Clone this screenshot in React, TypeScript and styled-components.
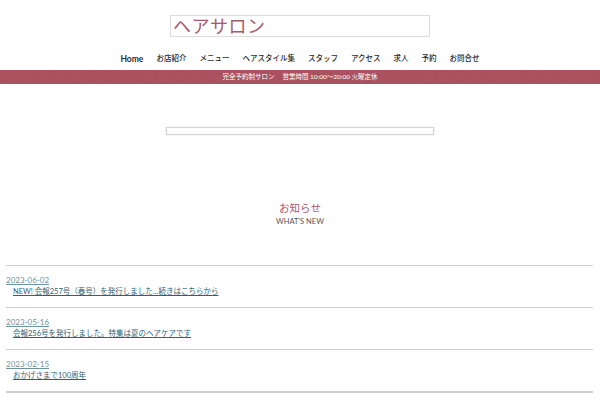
import React from "react"
import styled, { createGlobalStyle } from "styled-components"

const GlobalStyle = createGlobalStyle`
  html, body {
    margin: 0;
    padding: 0;
    background: #fff;
  }
  body {
    font-family: Lato, "Noto Sans CJK JP", sans-serif;
    color: #333;
  }
`

const accent = "#a55b6b"

const Header = styled.header`
  padding-top: 15px;
`

const LogoBox = styled.div`
  width: 260px;
  height: 22px;
  margin: 0 auto;
  box-sizing: border-box;
  border: 1px solid #ddd;
  display: flex;
  align-items: center;
  padding-left: 2px;
  font-size: 18px;
  line-height: 20px;
  color: ${accent};
  letter-spacing: 0.5px;
`

const Nav = styled.nav`
  margin-top: 16px;
  display: flex;
  justify-content: center;
  gap: 13px;
`

const NavItem = styled.a<{ $home?: boolean }>`
  font-size: ${(p) => (p.$home ? "8.5px" : "7.5px")};
  line-height: 12px;
  font-weight: ${(p) => (p.$home ? 700 : 500)};
  color: #2b2b2b;
  text-decoration: none;
`

const InfoBar = styled.div`
  margin-top: 5px;
  height: 14px;
  background: #a94f5e
    repeating-linear-gradient(
      45deg,
      rgba(255, 255, 255, 0.04) 0 1px,
      transparent 1px 3px
    );
  color: #fff;
  font-size: 6.5px;
  line-height: 14px;
  text-align: center;
  display: flex;
  justify-content: center;
  gap: 8px;
`

const Banner = styled.div`
  width: 268px;
  height: 8px;
  margin: 43px auto 0;
  box-sizing: border-box;
  border: 1px solid #d4d4d4;
  box-shadow: 0 0 2px rgba(0, 0, 0, 0.12);
`

const SectionHead = styled.div`
  margin-top: 67px;
  text-align: center;
`

const SectionTitle = styled.h2`
  margin: 0;
  font-size: 10.5px;
  line-height: 12px;
  font-weight: 400;
  color: ${accent};
`

const SectionSub = styled.p`
  margin: 4px 0 0;
  font-size: 7.5px;
  line-height: 8px;
  color: #555;
`

const NewsList = styled.ul`
  list-style: none;
  margin: 39px 7px 0 6px;
  padding: 0;
  border-bottom: 2px solid #cfcfcf;
`

const NewsItem = styled.li`
  border-top: 1px solid #cfcfcf;
  padding: 8px 0 9px;
`

const NewsDate = styled.a`
  display: block;
  font-size: 8px;
  line-height: 12px;
  color: #6f929e;
  text-decoration: underline;
  width: fit-content;
`

const NewsTitle = styled.a`
  display: block;
  margin-left: 7px;
  font-size: 7.5px;
  line-height: 12px;
  color: #2f6274;
  text-decoration: underline;
  width: fit-content;
`

const navItems = [
  "お店紹介",
  "メニュー",
  "ヘアスタイル集",
  "スタッフ",
  "アクセス",
  "求人",
  "予約",
  "お問合せ",
]

const news = [
  { date: "2023-06-02", title: "NEW! 会報257号（春号）を発行しました…続きはこちらから" },
  { date: "2023-05-16", title: "会報256号を発行しました。特集は夏のヘアケアです" },
  { date: "2023-02-15", title: "おかげさまで100周年" },
]

const App: React.FC = () => {
  return (
    <>
      <GlobalStyle />
      <Header>
        <LogoBox>ヘアサロン</LogoBox>
        <Nav>
          <NavItem href="#" $home>
            Home
          </NavItem>
          {navItems.map((item) => (
            <NavItem href="#" key={item}>
              {item}
            </NavItem>
          ))}
        </Nav>
      </Header>
      <InfoBar>
        <span>完全予約制サロン</span>
        <span>営業時間 10:00～20:00 火曜定休</span>
      </InfoBar>
      <Banner />
      <SectionHead>
        <SectionTitle>お知らせ</SectionTitle>
        <SectionSub>WHAT'S NEW</SectionSub>
      </SectionHead>
      <NewsList>
        {news.map((n) => (
          <NewsItem key={n.date}>
            <NewsDate href="#">{n.date}</NewsDate>
            <NewsTitle href="#">{n.title}</NewsTitle>
          </NewsItem>
        ))}
      </NewsList>
    </>
  )
}

export default App
